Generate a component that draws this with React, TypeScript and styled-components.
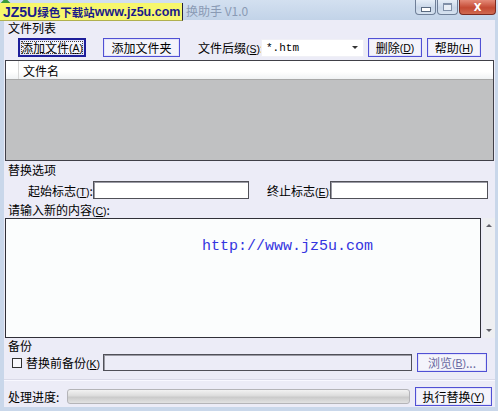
import styled, { createGlobalStyle } from "styled-components";

const GlobalStyle = createGlobalStyle`
    html, body { margin: 0; padding: 0; }
    body {
        width: 498px; height: 411px; overflow: hidden;
        font-family: "Noto Sans CJK SC", "Noto Sans", sans-serif;
        font-size: 12px;
        color: #000;
    }
`;

const Window = styled.div`
    width: 498px; height: 411px;
    display: flex; flex-direction: column;
    background: #c9d7ea;
`;

const TitleBar = styled.div`
    position: relative;
    height: 20px; flex: none;
    display: flex; align-items: center;
    background: linear-gradient(#d3e0f0, #c2d3e8);
`;

const AppIcon = styled.div`
    position: absolute; left: 1px; top: 0;
    width: 9px; height: 9px;
    background: #3c9a3c;
    transform: rotate(45deg);
`;

const TitleText = styled.span`
    margin-left: 186px;
    font-size: 12px;
    color: #8a9ab4;
`;

const Watermark = styled.div`
    position: absolute; left: 0; top: 3px;
    width: 183px; height: 18px;
    display: flex; align-items: center;
    padding-left: 3px;
    box-sizing: border-box;
    background: #f7f76c;
    border-right: 1px solid #202040;
    border-bottom: 1px solid #b0b050;
    color: #1b1b8a;
    font-weight: bold;
    white-space: nowrap;
    z-index: 2;
`;

const MarkLatin = styled.span<{ $size: number }>`
    font-family: "Liberation Sans", Arial, sans-serif;
    font-size: ${p => p.$size}px;
`;

const MarkCjk = styled.span`
    font-size: 11.5px;
`;

const Controls = styled.div`
    position: absolute; right: 2px; top: 0;
    display: flex; gap: 1px;
`;

const CtrlButton = styled.div<{ $w: number; $close?: boolean }>`
    width: ${p => p.$w}px; height: 15px;
    display: flex; align-items: center; justify-content: center;
    box-sizing: border-box;
    border: 1px solid ${p => (p.$close ? "#7a2a20" : "#6f7f98")};
    border-top: none;
    border-radius: 0 0 4px 4px;
    background: ${p => (p.$close ? "linear-gradient(#e48a78, #c44a34 55%, #d06a50)" : "linear-gradient(#e6eef8, #c8d6e8 55%, #d6e2f0)")};
    color: #fff;
    font-family: "DejaVu Sans", sans-serif;
    font-weight: bold;
    font-size: 10px;
`;

const MinGlyph = styled.div`
    width: 8px; height: 3px;
    border: 1px solid #5a6a80;
    background: #fff;
    margin-top: 4px;
`;

const MaxGlyph = styled.div`
    width: 7px; height: 5px;
    border: 1px solid #8090a8;
    border-top-width: 2px;
    background: #e8eef6;
`;

const Client = styled.div`
    flex: 1;
    display: flex; flex-direction: column;
    margin: 0 3px 4px 4px;
    background: #ececf7;
`;

const GroupLabel = styled.div<{ $top: number }>`
    height: 14px; line-height: 14px;
    margin-top: ${p => p.$top}px;
    padding-left: 4px;
`;

const Row = styled.div<{ $top: number; $h: number }>`
    display: flex; align-items: center;
    height: ${p => p.$h}px;
    margin-top: ${p => p.$top}px;
`;

const Button = styled.div<{ $w: number; $left?: number; $focus?: boolean; $disabled?: boolean }>`
    width: ${p => p.$w}px; height: 19px;
    margin-left: ${p => p.$left ?? 0}px;
    box-sizing: border-box;
    display: flex; align-items: center; justify-content: center;
    background: #f4f4fb;
    border: ${p => (p.$focus ? "2px solid #1e1e9a" : "1px solid #5050d4")};
    box-shadow: inset 0 0 0 1px #e2e2fa;
    outline: ${p => (p.$focus ? "1px dotted #404040" : "none")};
    outline-offset: -4px;
    color: ${p => (p.$disabled ? "#6868a0" : "#000")};
    white-space: nowrap;
    flex: none;
`;

const Label = styled.span<{ $w?: number; $left?: number }>`
    width: ${p => (p.$w ? `${p.$w}px` : "auto")};
    margin-left: ${p => p.$left ?? 0}px;
    white-space: nowrap;
    flex: none;
`;

const KeyText = styled.span`
    font-family: "Liberation Sans", Arial, sans-serif;
    font-size: 10.5px;
`;

const Combo = styled.div`
    width: 103px; height: 18px;
    box-sizing: border-box;
    display: flex; align-items: center; justify-content: space-between;
    padding: 0 5px 0 4px;
    background: #fff;
    border: 1px solid #f0f0f6;
    font-family: "Liberation Mono", monospace;
    font-size: 11px;
    flex: none;
`;

const Caret = styled.span`
    width: 0; height: 0;
    border-left: 3px solid transparent;
    border-right: 3px solid transparent;
    border-top: 3px solid #333;
`;

const FileList = styled.div`
    height: 99px;
    margin: 2px 1px 0 1px;
    display: flex; flex-direction: column;
    border: 1px solid #404048;
    background: #c0c1c2;
`;

const ListHeader = styled.div`
    height: 18px; flex: none;
    display: flex;
    background: linear-gradient(#fff 60%, #f0f2f4);
    border-bottom: 1px solid #a8a8a8;
`;

const HeaderCell = styled.div<{ $w?: number }>`
    width: ${p => (p.$w ? `${p.$w}px` : "auto")};
    flex: ${p => (p.$w ? "none" : "1")};
    display: flex; align-items: center;
    padding-left: ${p => (p.$w ? 0 : 4)}px;
    border-right: ${p => (p.$w ? "1px solid #d8d8d8" : "none")};
`;

const TextBox = styled.div<{ $w: number; $h?: number; $muted?: boolean }>`
    width: ${p => p.$w}px; height: ${p => p.$h ?? 18}px;
    box-sizing: border-box;
    background: ${p => (p.$muted ? "#ececf7" : "#fff")};
    border: 1px solid #505058;
    box-shadow: inset 1px 1px 0 #9a9aa4;
    flex: none;
`;

const EditorRow = styled.div`
    display: flex; gap: 2px;
    height: 120px;
    margin: 1px 0 0 1px;
`;

const Editor = styled.div`
    width: 476px;
    box-sizing: border-box;
    border: 1px solid #303038;
    background: #fbfdfd;
    padding: 17px 0 0 196px;
`;

const Url = styled.span`
    font-family: "Liberation Mono", monospace;
    font-size: 15px;
    color: #3434e0;
`;

const ScrollBar = styled.div`
    width: 12px;
    display: flex; flex-direction: column; justify-content: space-between; align-items: center;
    padding: 6px 0 6px;
    box-sizing: border-box;
    background: #eeeff2;
`;

const Arrow = styled.span<{ $down?: boolean }>`
    width: 0; height: 0;
    border-left: 3px solid transparent;
    border-right: 3px solid transparent;
    border-${p => (p.$down ? "top" : "bottom")}: 3px solid #606068;
`;

const CheckBox = styled.span`
    width: 8px; height: 8px;
    margin: 0 4px 0 8px;
    border: 1px solid #303030;
    background: #f8f8fc;
    flex: none;
`;

const Separator = styled.div`
    height: 1px;
    margin-top: 7px;
    background: #dadae8;
    border-bottom: 1px solid #f8f8ff;
`;

const Progress = styled.div`
    width: 343px; height: 15px;
    margin-left: 4px;
    box-sizing: border-box;
    border: 1px solid #b4b4b8;
    border-radius: 3px;
    background: linear-gradient(#f2f2f2, #dcdcdc 45%, #cacaca 55%, #e2e2e2);
    flex: none;
`;

function Key({ k }: { k: string }) {
    return <KeyText>(<u>{k}</u>)</KeyText>;
}

function App() {
    return (
        <Window>
            <GlobalStyle />
            <TitleBar>
                <AppIcon />
                <TitleText>换助手 V1.0</TitleText>
                <Watermark>
                    <MarkLatin $size={14}>JZ5U</MarkLatin>
                    <MarkCjk>绿色下载站</MarkCjk>
                    <MarkLatin $size={12.5}>www.jz5u.com</MarkLatin>
                </Watermark>
                <Controls>
                    <CtrlButton $w={21}><MinGlyph /></CtrlButton>
                    <CtrlButton $w={21}><MaxGlyph /></CtrlButton>
                    <CtrlButton $w={37} $close>X</CtrlButton>
                </Controls>
            </TitleBar>
            <Client>
                <GroupLabel $top={1}>文件列表</GroupLabel>
                <Row $top={2} $h={21}>
                    <Button $w={68} $left={14} $focus>添加文件<Key k="A" /></Button>
                    <Button $w={77} $left={17}>添加文件夹</Button>
                    <Label $w={63} $left={18}>文件后缀<Key k="S" />:</Label>
                    <Combo>*.htm<Caret /></Combo>
                    <Button $w={54} $left={4}>删除<Key k="D" /></Button>
                    <Button $w={54} $left={5}>帮助<Key k="H" /></Button>
                </Row>
                <FileList>
                    <ListHeader>
                        <HeaderCell $w={12} />
                        <HeaderCell>文件名</HeaderCell>
                    </ListHeader>
                </FileList>
                <GroupLabel $top={2}>替换选项</GroupLabel>
                <Row $top={4} $h={18}>
                    <Label $w={65} $left={24}>起始标志<Key k="T" />:</Label>
                    <TextBox $w={156} />
                    <Label $w={63} $left={18}>终止标志<Key k="E" />:</Label>
                    <TextBox $w={158} />
                </Row>
                <GroupLabel $top={4}>请输入新的内容<Key k="C" />:</GroupLabel>
                <EditorRow>
                    <Editor><Url>http://www.jz5u.com</Url></Editor>
                    <ScrollBar>
                        <Arrow />
                        <Arrow $down />
                    </ScrollBar>
                </EditorRow>
                <GroupLabel $top={1}>备份</GroupLabel>
                <Row $top={0} $h={19}>
                    <CheckBox />
                    <Label $w={77}>替换前备份<Key k="K" /></Label>
                    <TextBox $w={309} $h={17} $muted />
                    <Button $w={70} $left={5} $disabled>浏览<Key k="B" />...</Button>
                </Row>
                <Separator />
                <Row $top={6} $h={19}>
                    <Label $w={55} $left={4}>处理进度:</Label>
                    <Progress />
                    <Button $w={77} $left={5}>执行替换<Key k="Y" /></Button>
                </Row>
            </Client>
        </Window>
    );
}

export default App;
